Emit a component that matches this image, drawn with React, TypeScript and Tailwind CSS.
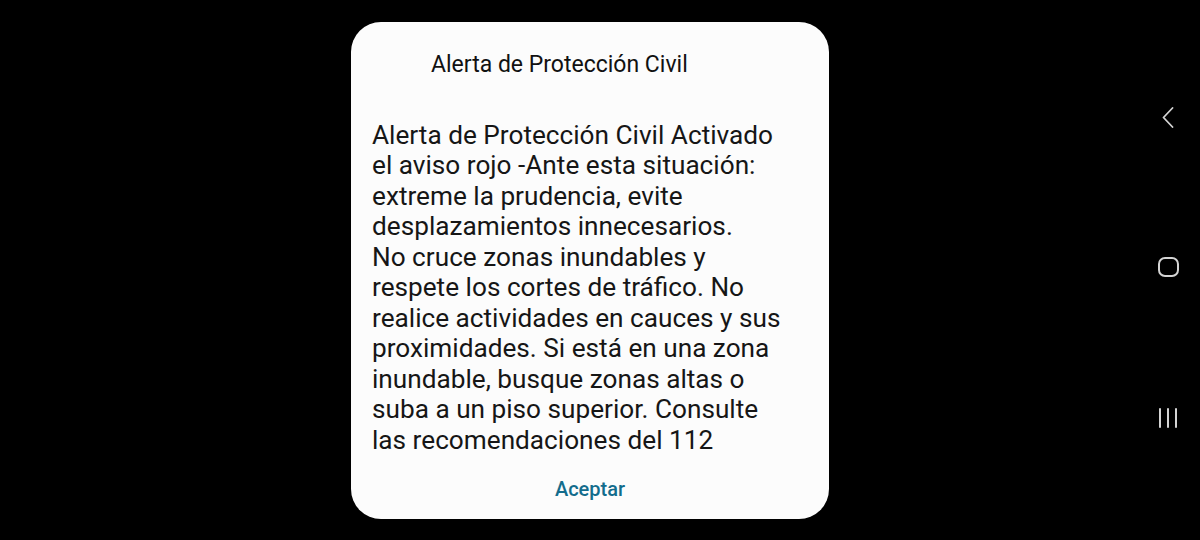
const lines = [
  "Alerta de Protección Civil Activado",
  "el aviso rojo -Ante esta situación:",
  "extreme la prudencia, evite",
  "desplazamientos innecesarios.",
  "No cruce zonas inundables y",
  "respete los cortes de tráfico. No",
  "realice actividades en cauces y sus",
  "proximidades. Si está en una zona",
  "inundable, busque zonas altas o",
  "suba a un piso superior. Consulte",
  "las recomendaciones del 112",
];

function NavBar() {
  return (
    <div className="flex w-[64px] flex-col items-center text-[#d4d4d4]">
      <div className="mt-[106px] flex h-[22px] w-[22px] items-center justify-center">
        <svg width="14" height="22" viewBox="0 0 14 22" fill="none">
          <path d="M11.5 2 L2.5 11.5 L11.5 21" stroke="currentColor" strokeWidth="1.8" strokeLinecap="round" strokeLinejoin="round" />
        </svg>
      </div>
      <div className="mt-[129px] h-[20px] w-[21px] rounded-[7px] border-2 border-[#d4d4d4]" />
      <div className="mt-[131px] flex h-[20px] items-center gap-[6px]">
        <span className="h-[20px] w-[2px] rounded-full bg-[#d4d4d4]" />
        <span className="h-[20px] w-[2px] rounded-full bg-[#d4d4d4]" />
        <span className="h-[20px] w-[2px] rounded-full bg-[#d4d4d4]" />
      </div>
    </div>
  );
}

export default function App() {
  return (
    <div className="flex h-[540px] w-[1200px] bg-black" style={{ fontFamily: "Roboto, 'Noto Sans', sans-serif" }}>
      <div className="flex flex-1 items-center justify-center pl-[44px]">
        <div className="flex h-[497px] w-[478px] flex-col rounded-[30px] bg-[#fcfcfc]">
          <h1 className="pl-[80px] pt-[31px] text-[23px] leading-[24px] font-normal text-[#111111]">
            Alerta de Protección Civil
          </h1>
          <div className="mt-[43px] pl-[21px] text-[26.2px] leading-[30.5px] text-[#161616]">
            {lines.map((l) => (
              <div key={l} className="whitespace-nowrap">{l}</div>
            ))}
          </div>
          <button className="mx-auto mt-[22px] text-[20px] leading-[24px] font-medium text-[#136c8c]">
            Aceptar
          </button>
        </div>
      </div>
      <NavBar />
    </div>
  );
}
